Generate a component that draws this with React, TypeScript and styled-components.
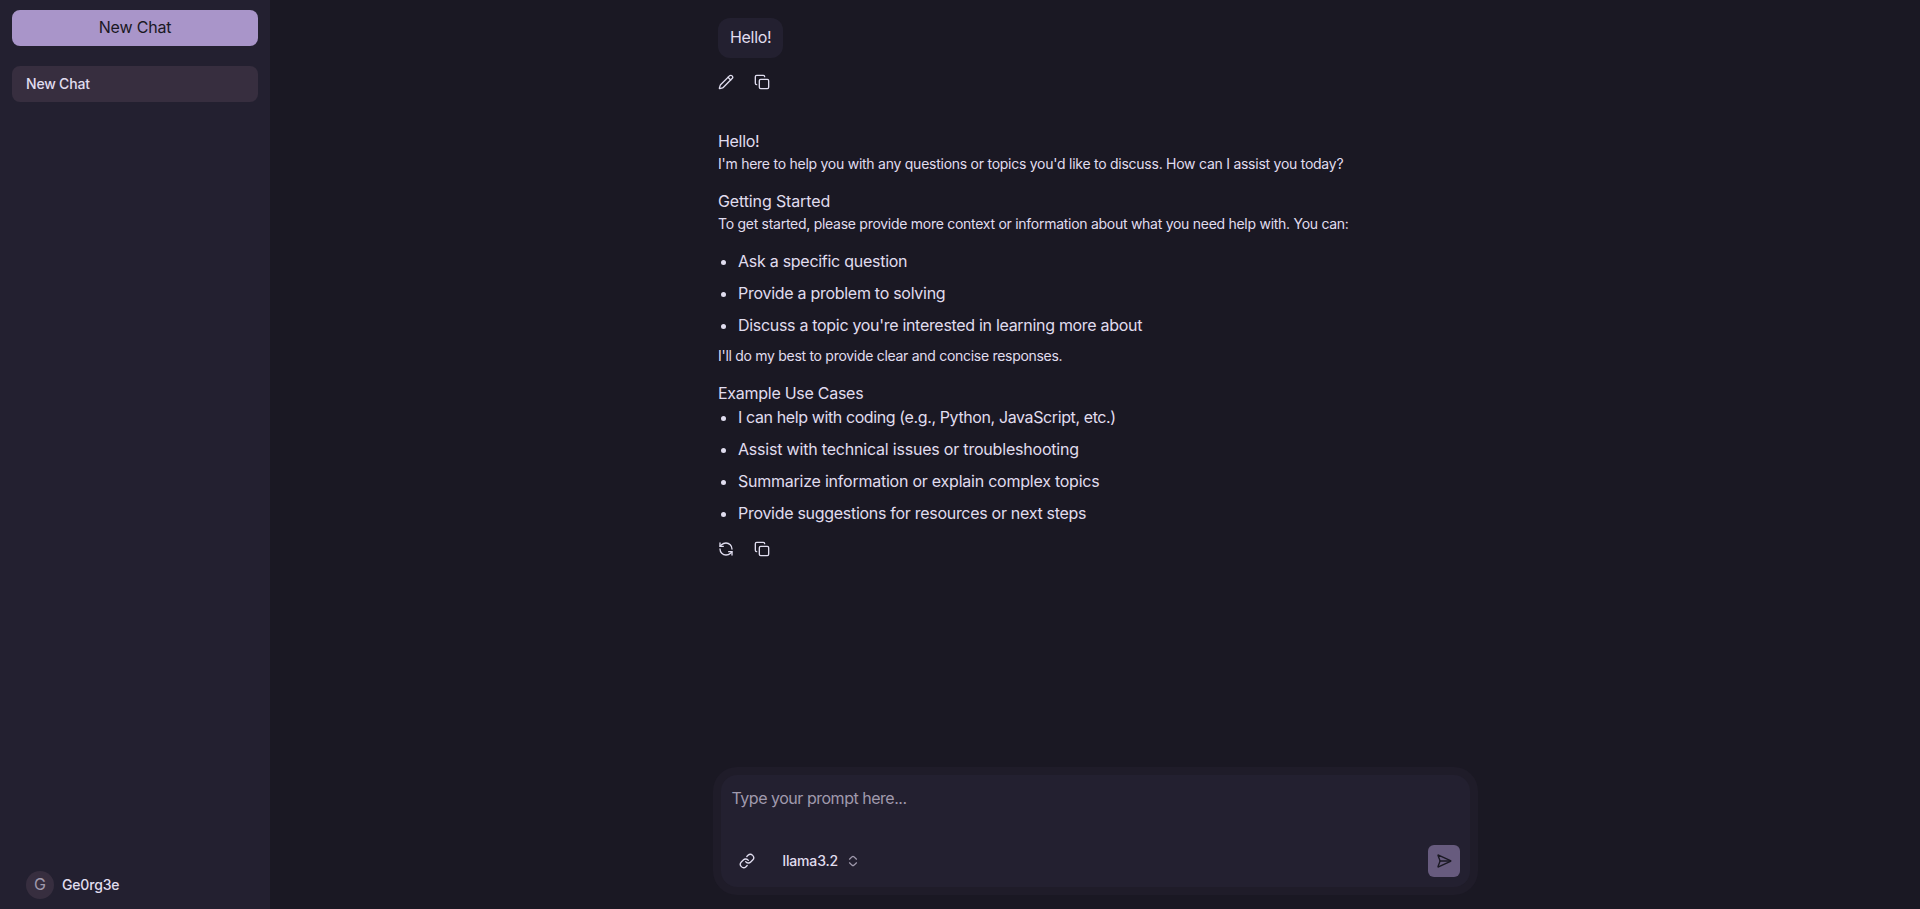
import React from "react";
import styled, { createGlobalStyle } from "styled-components";

const c = {
  bg: "#1a1823",
  panel: "#232030",
  text: "#e0ddef",
  muted: "#a09aad",
  primary: "#a995c9",
  accent: "#372e3f",
};

const Global = createGlobalStyle`
  * { box-sizing: border-box; }
  html, body { margin: 0; padding: 0; background: ${c.bg}; }
  body { font-family: Inter, "Liberation Sans", sans-serif; color: ${c.text}; font-size: 16px; line-height: 24px; overflow: hidden; }
  button { font: inherit; color: inherit; border: 0; padding: 0; background: none; }
  p, ul, h2 { margin: 0; padding: 0; font-weight: 400; }
`;

const Page = styled.div`
  display: flex;
  height: 100vh;
`;

const Sidebar = styled.aside`
  width: 270px;
  flex: none;
  background: ${c.panel};
  padding: 10px 12px;
  display: flex;
  flex-direction: column;
`;

const NewChatButton = styled.button`
  height: 36px;
  padding-bottom: 2px;
  border-radius: 8px;
  background: ${c.primary};
  color: ${c.bg};
  letter-spacing: -0.2px;
`;

const ChatItem = styled.a`
  margin-top: 20px;
  height: 36px;
  border-radius: 8px;
  background: ${c.accent};
  padding: 8px 14px;
  font-size: 14px;
  line-height: 20px;
  font-weight: 500;
  letter-spacing: -0.2px;
`;

const User = styled.div`
  margin-top: auto;
  padding: 0 14px;
  display: flex;
  align-items: center;
  gap: 8px;
  font-size: 14px;
  font-weight: 500;
  letter-spacing: -0.17px;
`;

const Avatar = styled.span`
  width: 28px;
  height: 28px;
  border-radius: 50%;
  background: ${c.accent};
  color: ${c.muted};
  font-size: 16px;
  font-weight: 400;
  line-height: 27px;
  text-align: center;
`;

const Main = styled.main`
  flex: 1;
  display: flex;
  flex-direction: column;
  align-items: center;
  padding: 18px 0 14px;
`;

const Thread = styled.section`
  width: 754px;
  flex: 1;
`;

const Bubble = styled.div`
  width: 65px;
  height: 40px;
  padding: 7px 12px;
  border-radius: 12px;
  background: ${c.panel};
  letter-spacing: -0.3px;
  white-space: nowrap;
`;

const Actions = styled.div`
  display: flex;
  gap: 20px;
  height: 16px;
  margin-top: 16px;
  svg { display: block; }
`;

const Answer = styled.article`
  margin-top: 39px;
`;

const Heading = styled.h2<{ $track: number }>`
  font-size: 16px;
  line-height: 24px;
  letter-spacing: ${(p) => p.$track}px;
`;

const Para = styled.p<{ $track: number }>`
  font-size: 14px;
  line-height: 20px;
  padding-top: 1px;
  margin-bottom: 15px;
  letter-spacing: ${(p) => p.$track}px;
`;

const List = styled.ul`
  padding-left: 20px;
`;

const Item = styled.li<{ $track: number }>`
  margin-bottom: 8px;
  letter-spacing: ${(p) => p.$track}px;
`;

const Composer = styled.div`
  width: 765px;
  height: 128px;
  padding: 8px;
  border-radius: 24px;
  background: #1f1c29;
`;

const ComposerBox = styled.div`
  height: 112px;
  border-radius: 16px;
  background: ${c.panel};
  padding: 11px 10px 10px 11px;
  display: flex;
  flex-direction: column;
  justify-content: space-between;
`;

const Placeholder = styled.div`
  color: ${c.muted};
  letter-spacing: -0.48px;
`;

const Tools = styled.div`
  display: flex;
  align-items: center;
  padding-left: 7px;
  svg { display: block; }
`;

const Model = styled.button`
  margin-left: 28px;
  display: flex;
  align-items: center;
  gap: 8px;
  font-size: 14px;
  font-weight: 500;
  letter-spacing: -0.15px;
`;

const Send = styled.button`
  margin-left: auto;
  width: 32px;
  height: 32px;
  border-radius: 6px;
  background: #675b7e;
  color: ${c.bg};
  display: grid;
  place-items: center;
`;

type IconProps = { children: React.ReactNode; size?: number; color?: string };

const Icon = ({ children, size = 16, color = "currentColor" }: IconProps) => (
  <svg width={size} height={size} viewBox="0 0 24 24" fill="none" stroke={color} strokeWidth={2} strokeLinecap="round" strokeLinejoin="round">
    {children}
  </svg>
);

const CopyIcon = () => (
  <Icon>
    <rect x="8" y="8" width="14" height="14" rx="2" />
    <path d="M4 16c-1.1 0-2-.9-2-2V4c0-1.1.9-2 2-2h10c1.1 0 2 .9 2 2" />
  </Icon>
);

export default function App() {
  return (
    <Page>
      <Global />
      <Sidebar>
        <NewChatButton>New Chat</NewChatButton>
        <ChatItem>New Chat</ChatItem>
        <User>
          <Avatar>G</Avatar>
          <span>Ge0rg3e</span>
        </User>
      </Sidebar>
      <Main>
        <Thread>
          <Bubble>Hello!</Bubble>
          <Actions>
            <Icon>
              <path d="M21.174 6.812a1 1 0 0 0-3.986-3.987L3.842 16.174a2 2 0 0 0-.5.83l-1.321 4.352a.5.5 0 0 0 .623.622l4.353-1.32a2 2 0 0 0 .83-.497z" />
              <path d="m15 5 4 4" />
            </Icon>
            <CopyIcon />
          </Actions>
          <Answer>
            <Heading $track={-0.3}>Hello!</Heading>
            <Para $track={-0.255}>I'm here to help you with any questions or topics you'd like to discuss. How can I assist you today?</Para>
            <Heading $track={-0.13}>Getting Started</Heading>
            <Para $track={-0.275}>To get started, please provide more context or information about what you need help with. You can:</Para>
            <List>
              <Item $track={-0.27}>Ask a specific question</Item>
              <Item $track={-0.28}>Provide a problem to solving</Item>
              <Item $track={-0.306}>Discuss a topic you're interested in learning more about</Item>
            </List>
            <Para $track={-0.29}>I'll do my best to provide clear and concise responses.</Para>
            <Heading $track={-0.27}>Example Use Cases</Heading>
            <List>
              <Item $track={-0.39}>I can help with coding (e.g., Python, JavaScript, etc.)</Item>
              <Item $track={-0.2}>Assist with technical issues or troubleshooting</Item>
              <Item $track={-0.235}>Summarize information or explain complex topics</Item>
              <Item $track={-0.29}>Provide suggestions for resources or next steps</Item>
            </List>
          </Answer>
          <Actions>
            <Icon>
              <path d="M21 12a9 9 0 0 0-9-9 9.75 9.75 0 0 0-6.74 2.74L3 8" />
              <path d="M3 3v5h5" />
              <path d="M3 12a9 9 0 0 0 9 9 9.75 9.75 0 0 0 6.74-2.74L21 16" />
              <path d="M16 16h5v5" />
            </Icon>
            <CopyIcon />
          </Actions>
        </Thread>
        <Composer>
          <ComposerBox>
            <Placeholder>Type your prompt here...</Placeholder>
            <Tools>
              <Icon>
                <path d="M10 13a5 5 0 0 0 7.54.54l3-3a5 5 0 0 0-7.07-7.07l-1.72 1.71" />
                <path d="M14 11a5 5 0 0 0-7.54-.54l-3 3a5 5 0 0 0 7.07 7.07l1.71-1.71" />
              </Icon>
              <Model>
                <span>llama3.2</span>
                <Icon size={14} color={c.muted}>
                  <path d="M18 15s-4.4 5-6 5-6-5-6-5" />
                  <path d="M18 9s-4.4-5-6-5-6 5-6 5" />
                </Icon>
              </Model>
              <Send>
                <Icon>
                  <path d="M3.714 3.048a.498.498 0 0 0-.683.627l2.843 7.627a2 2 0 0 1 0 1.396l-2.842 7.627a.498.498 0 0 0 .682.627l18-8.5a.5.5 0 0 0 0-.904z" />
                  <path d="M6 12h16" />
                </Icon>
              </Send>
            </Tools>
          </ComposerBox>
        </Composer>
      </Main>
    </Page>
  );
}
